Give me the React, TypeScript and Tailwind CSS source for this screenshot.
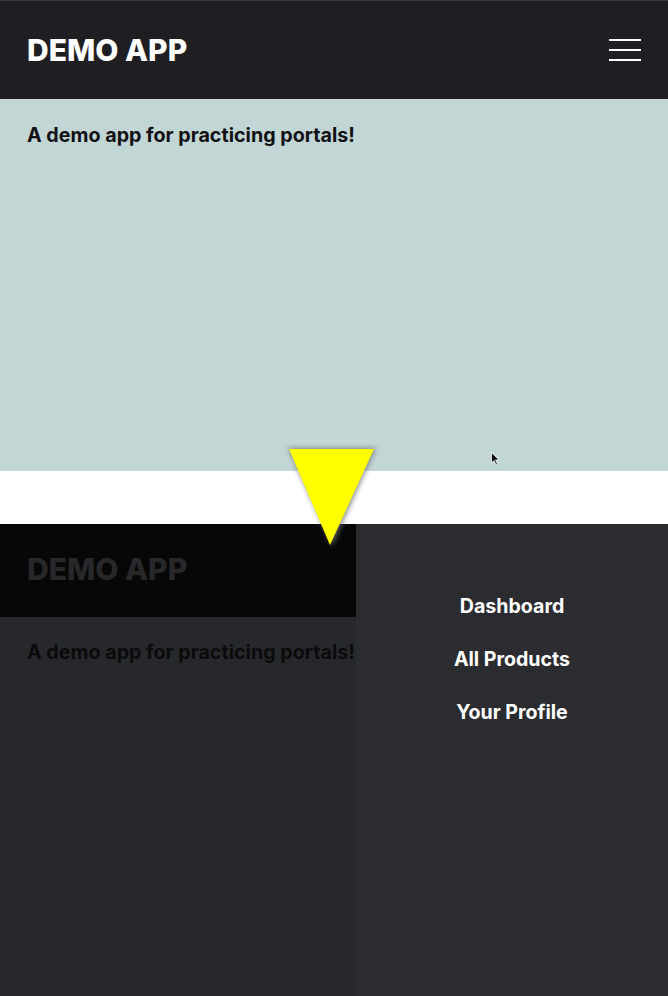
const font = { fontFamily: "Inter, 'Noto Sans', sans-serif" }

function Header({ dim }: { dim?: boolean }) {
  return (
    <div
      className={`flex items-center justify-between px-[27px] ${
        dim ? "h-[93px] bg-[#070707]" : "h-[100px] bg-[#1f1e23] border-t border-[#3a3a3e] border-b border-b-[#d0d6d6]"
      }`}
    >
      <h1 className={`text-[30px] leading-[40px] font-extrabold ${dim ? "text-[#28282b] -mt-[3px]" : "text-white"}`}>
        DEMO APP
      </h1>
      {!dim && (
        <div className="flex flex-col gap-[8px]">
          <span className="block w-[32px] h-[2px] bg-white" />
          <span className="block w-[32px] h-[2px] bg-white" />
          <span className="block w-[32px] h-[2px] bg-white" />
        </div>
      )}
    </div>
  )
}

export default function App() {
  return (
    <div className="relative w-[668px] h-[996px] overflow-hidden bg-white" style={font}>
      {/* before: menu closed */}
      <div className="flex flex-col h-[471px]">
        <Header />
        <div className="flex-1 bg-[#c2d6d6] px-[27px] pt-[21px]">
          <p className="text-[19.7px] leading-[28px] font-bold text-[#111114] whitespace-nowrap">
            A demo app for practicing portals!
          </p>
        </div>
      </div>

      <div className="h-[53px] bg-white" />

      {/* after: menu open */}
      <div className="flex h-[472px]">
        <div className="flex flex-col w-[356px] overflow-hidden">
          <Header dim />
          <div className="flex-1 bg-[#27282c] px-[27px] pt-[21px]">
            <p className="text-[19.7px] leading-[28px] font-bold text-[#0b0b0c] whitespace-nowrap">
              A demo app for practicing portals!
            </p>
          </div>
        </div>
        <nav className="flex-1 bg-[#2b2c30] flex flex-col items-center pt-[68px] gap-[25px]">
          <a className="text-[19.6px] leading-[28px] font-bold text-white">Dashboard</a>
          <a className="text-[19.6px] leading-[28px] font-bold text-white">All Products</a>
          <a className="text-[19.6px] leading-[28px] font-bold text-white">Your Profile</a>
        </nav>
      </div>

      {/* yellow arrow */}
      <svg className="absolute left-[284px] top-[444px]" width="96" height="106" viewBox="0 0 96 106">
        <defs>
          <filter id="sh" x="-20%" y="-20%" width="140%" height="140%">
            <feGaussianBlur stdDeviation="2.5" />
          </filter>
        </defs>
        <polygon points="4,4 92,4 48,102" fill="#6f7272" opacity="0.8" filter="url(#sh)" />
        <polygon points="5,5 90,5 46,101" fill="#ffff00" />
      </svg>

      {/* mouse pointer */}
      <svg className="absolute left-[491px] top-[452px]" width="9" height="14" viewBox="0 0 9 14">
        <path d="M0.5 0.5 L0.5 11 L3 8.5 L5 13 L6.5 12.3 L4.6 8 L8 8 Z" fill="#000" stroke="#fff" strokeWidth="0.8" />
      </svg>
    </div>
  )
}
